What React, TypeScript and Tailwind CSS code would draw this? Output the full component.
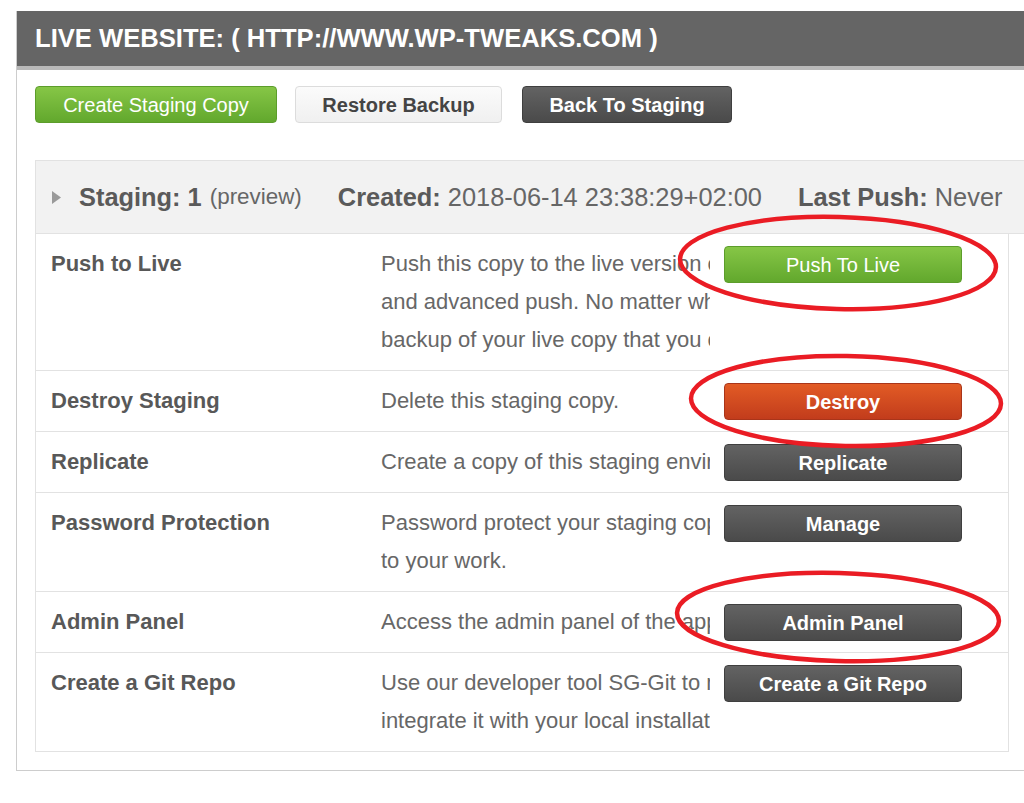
import React from 'react'

type Row = {
  label: string
  lines: string[]
  button: string
  kind: 'green' | 'red' | 'dark'
}

const rows: Row[] = [
  {
    label: 'Push to Live',
    lines: [
      'Push this copy to the live version of your website with simple',
      'and advanced push. No matter which option you choose, we will create a',
      'backup of your live copy that you can restore at any time.',
    ],
    button: 'Push To Live',
    kind: 'green',
  },
  { label: 'Destroy Staging', lines: ['Delete this staging copy.'], button: 'Destroy', kind: 'red' },
  { label: 'Replicate', lines: ['Create a copy of this staging environment.'], button: 'Replicate', kind: 'dark' },
  {
    label: 'Password Protection',
    lines: ['Password protect your staging copy to restrict access', 'to your work.'],
    button: 'Manage',
    kind: 'dark',
  },
  { label: 'Admin Panel', lines: ['Access the admin panel of the application.'], button: 'Admin Panel', kind: 'dark' },
  {
    label: 'Create a Git Repo',
    lines: ['Use our developer tool SG-Git to make a repository and', 'integrate it with your local installation.'],
    button: 'Create a Git Repo',
    kind: 'dark',
  },
]

const btnKind = {
  green: 'bg-gradient-to-b from-[#86c646] to-[#62a82d] border-[#5c9d2b] font-normal',
  red: 'bg-gradient-to-b from-[#e25b25] to-[#c23c1c] border-[#a9351a] font-bold',
  dark: 'bg-gradient-to-b from-[#636363] to-[#4a4a4a] border-[#3f3f3f] font-bold',
}

export default function App() {
  return (
    <div className="relative w-[1024px] h-[803px] overflow-hidden bg-white font-['Liberation_Sans',Arial,sans-serif]">
      <div className="mt-[11px] ml-[16px] w-[1040px] border-l border-b border-[#cdcdcd] pb-[18px]">
        {/* title bar */}
        <div className="h-[59px] bg-[#656565] border-b-[4px] border-[#b9b9b9] flex items-center pl-[18px]">
          <span className="text-white font-bold text-[25.6px] leading-none">LIVE WEBSITE: ( HTTP://WWW.WP-TWEAKS.COM )</span>
        </div>

        {/* top actions */}
        <div className="flex items-center mt-[16px] ml-[18px]">
          <button className="w-[242px] h-[37px] rounded-[4px] border border-[#5c9d2b] bg-gradient-to-b from-[#86c646] to-[#62a82d] text-white text-[20px]">
            Create Staging Copy
          </button>
          <button className="ml-[18px] w-[207px] h-[37px] rounded-[4px] border border-[#dcdcdc] bg-gradient-to-b from-[#fbfbfb] to-[#f0f0f0] text-[#444] font-bold text-[20px]">
            Restore Backup
          </button>
          <button className="ml-[20px] w-[210px] h-[37px] rounded-[4px] border border-[#3f3f3f] bg-gradient-to-b from-[#636363] to-[#4a4a4a] text-white font-bold text-[20px]">
            Back To Staging
          </button>
        </div>

        {/* staging table */}
        <div className="mt-[37px] ml-[18px]">
          <div className="w-[1010px] h-[74px] bg-[#f2f2f2] border-t border-b border-l border-[#e2e2e2] flex items-center pl-[16px] text-[#5a5a5a] text-[25.4px] whitespace-nowrap">
            <svg width="9" height="13" viewBox="0 0 9 13" className="mr-[18px]">
              <path d="M0 0 L9 6.5 L0 13 Z" fill="#9a9a9a" />
            </svg>
            <span className="font-bold">Staging: 1</span>
            <span className="ml-[8px] text-[22.4px] text-[#666]">(preview)</span>
            <span className="ml-[36px] font-bold">Created:</span>
            <span className="ml-[7px] text-[#666]">2018-06-14 23:38:29+02:00</span>
            <span className="ml-[36px] font-bold">Last Push:</span>
            <span className="ml-[7px] text-[#666]">Never</span>
          </div>
          <div className="w-[974px] border-l border-r border-b border-[#e2e2e2]">
            {rows.map((r, i) => (
              <div
                key={r.label}
                className={`flex items-start py-[11px] leading-[38px] ${i < rows.length - 1 ? 'border-b border-[#e2e2e2]' : ''}`}
              >
                <div className="w-[345px] pl-[15px] text-[22px] font-bold text-[#585858] whitespace-nowrap">{r.label}</div>
                <div className="w-[329px] overflow-hidden text-[22px] text-[#676767]">
                  {r.lines.map((l) => (
                    <div key={l} className="whitespace-nowrap">{l}</div>
                  ))}
                </div>
                <button
                  className={`ml-[14px] mt-[1px] w-[238px] h-[37px] rounded-[4px] border text-white text-[20px] leading-none ${btnKind[r.kind]}`}
                >
                  {r.button}
                </button>
              </div>
            ))}
          </div>
        </div>
      </div>

      {/* red marker circles */}
      <svg className="absolute left-0 top-0 pointer-events-none" width="1024" height="803">
        <g fill="none" stroke="#ea1c24" strokeWidth="4.5">
          <ellipse cx="838" cy="263" rx="158" ry="46" transform="rotate(1.5 838 263)" />
          <ellipse cx="846" cy="401" rx="155" ry="45" transform="rotate(1 846 401)" />
          <ellipse cx="838" cy="617" rx="161" ry="44" transform="rotate(1.5 838 617)" />
        </g>
      </svg>
    </div>
  )
}
